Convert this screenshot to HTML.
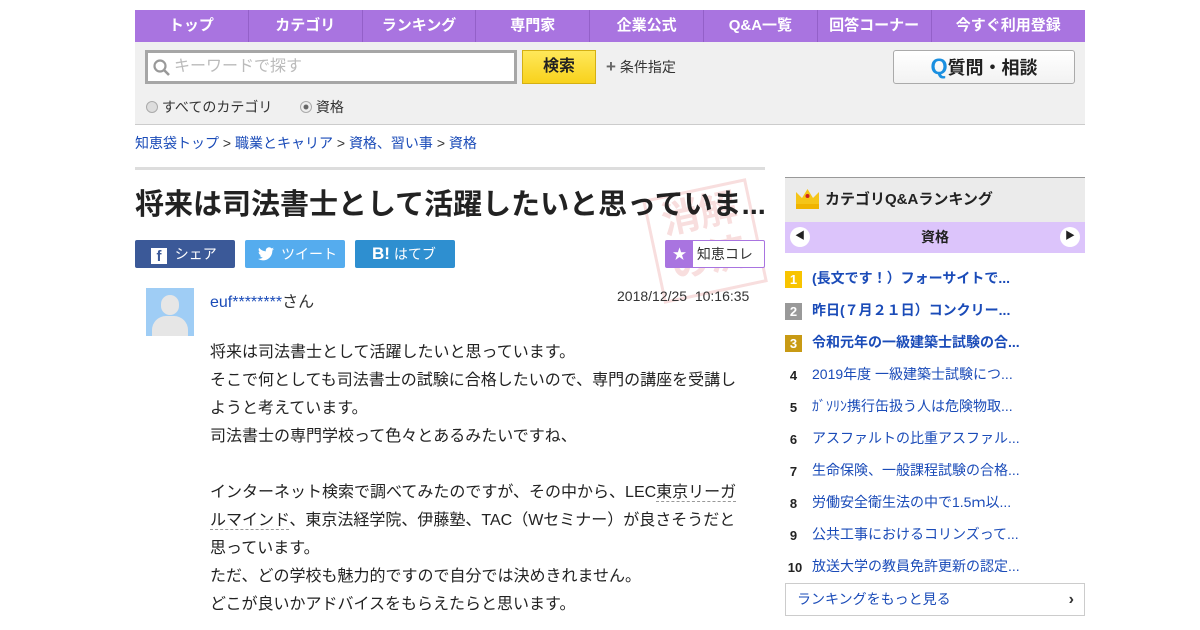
<!DOCTYPE html>
<html><head><meta charset="utf-8"><style>
*{margin:0;padding:0;box-sizing:border-box}
body{width:1200px;height:630px;overflow:hidden;background:#fff;font-family:"Liberation Sans","Noto Sans CJK JP",sans-serif;color:#333;position:relative}
.a{position:absolute}
.nav{left:135px;top:10px;width:950px;height:32px;background:#a974e0;display:flex}
.nav div{flex:1;color:#fff;font-weight:bold;font-size:15px;text-align:center;line-height:32px;border-right:1px solid #9360c8}
.nav div:last-child{border:none;flex:1.36}
.sb{left:135px;top:42px;width:950px;height:83px;background:#f0f0f0;border-bottom:1px solid #ccc}
a,.lk{color:#1a4bb8;text-decoration:none}
.rk{left:785px;width:300px;height:32px;font-size:14px;line-height:32px}
.rk b.n{display:inline-block;width:17px;height:17px;line-height:17px;text-align:center;color:#fff;font-size:13px;margin-right:10px;vertical-align:middle}
.rk .t{color:#1a4bb8}
</style></head><body>
<div class="a nav"><div>トップ</div><div>カテゴリ</div><div>ランキング</div><div>専門家</div><div>企業公式</div><div>Q&amp;A一覧</div><div>回答コーナー</div><div>今すぐ利用登録</div></div>
<div class="a sb"></div>
<div class="a" style="left:145px;top:50px;width:372px;height:34px;border:3px solid #a6a6a6;background:#fff;font-size:16px;color:#bbb;line-height:28px;padding-left:26px">キーワードで探す
<svg class="a" style="left:5px;top:6px" width="18" height="18" viewBox="0 0 18 18"><circle cx="7" cy="7" r="5.5" fill="none" stroke="#999" stroke-width="2.2"/><path d="M11 11l5 5" stroke="#999" stroke-width="2.6"/></svg></div>
<div class="a" style="left:522px;top:50px;width:74px;height:34px;background:linear-gradient(#ffe85a,#f8d21c);border:1px solid #d4b013;text-align:center;line-height:32px;font-weight:bold;font-size:16px;color:#222">検索</div>
<div class="a" style="left:606px;top:57px;font-size:14px;color:#333"><b style="font-size:17px;color:#666">+</b> 条件指定</div>
<div class="a" style="left:893px;top:50px;width:182px;height:34px;background:linear-gradient(#fff,#f2f2f2);border:1px solid #aaa;border-radius:3px;text-align:center;line-height:32px;font-weight:bold;font-size:18px;color:#222"><span style="color:#1a8fe0;font-size:22px">Q</span>質問・相談</div>
<div class="a" style="left:146px;top:98px;font-size:14px;color:#333;line-height:18px"><span style="display:inline-block;width:12px;height:12px;border:1px solid #aaa;border-radius:50%;background:#ddd;vertical-align:-1px"></span> すべてのカテゴリ</div>
<div class="a" style="left:300px;top:98px;font-size:14px;color:#333;line-height:18px"><span style="display:inline-block;width:12px;height:12px;border:1px solid #aaa;border-radius:50%;background:radial-gradient(#666 30%,#eee 40%);vertical-align:-1px"></span> 資格</div>
<div class="a" style="left:135px;top:134px;font-size:14px;line-height:18px"><a>知恵袋トップ</a> &gt; <a>職業とキャリア</a> &gt; <a>資格、習い事</a> &gt; <a>資格</a></div>
<div class="a" style="left:135px;top:167px;width:630px;height:3px;background:#ddd"></div>
<div class="a" style="left:652px;top:188px;width:106px;height:106px;border:3px solid #f8dede;transform:rotate(-12deg);color:#f8dede;font-size:38px;line-height:46px;text-align:center;font-weight:bold">消解<br>の済</div>
<div class="a" style="left:135px;top:186px;font-size:29px;font-weight:bold;color:#222;line-height:38px;white-space:nowrap">将来は司法書士として活躍したいと思っていま...</div>
<div class="a" style="left:135px;top:240px;width:100px;height:28px;background:#3b5998;border-radius:2px;color:#fff;font-size:14px;line-height:28px;padding-left:16px"><span style="display:inline-block;width:16px;height:16px;background:#fff;color:#3b5998;font-weight:bold;text-align:center;line-height:18px;font-size:15px;vertical-align:-2px">f</span>&nbsp; シェア</div>
<div class="a" style="left:245px;top:240px;width:100px;height:28px;background:#55acee;border-radius:2px;color:#fff;font-size:14px;line-height:28px;padding-left:36px">ツイート
<svg class="a" style="left:13px;top:7px" width="16" height="14" viewBox="0 0 24 20"><path d="M24 2.4a10 10 0 0 1-2.8.8A5 5 0 0 0 23.3.4a10 10 0 0 1-3.1 1.2A4.9 4.9 0 0 0 11.8 6 14 14 0 0 1 1.7.9a4.9 4.9 0 0 0 1.5 6.6A4.900 4.900 0 0 1 1 6.9 4.900 4.900 0 0 0 4.900 11.8a4.900 4.900 0 0 1-2.2.1 4.900 4.900 0 0 0 4.600 3.400A9.900 9.900 0 0 1 0 17.300 14 14 0 0 0 7.500 19.500c9.100 0 14-7.500 14-14v-.6A10 10 0 0 0 24 2.400z" fill="#fff"/></svg></div>
<div class="a" style="left:355px;top:240px;width:100px;height:28px;background:#2e8fd0;border-radius:2px;color:#fff;font-size:14px;line-height:28px;padding-left:17px"><b style="font-size:17px">B!</b> はてブ</div>
<div class="a" style="left:665px;top:240px;width:100px;height:28px;border:1px solid #a974e0;border-radius:2px;background:#fff;font-size:14px;line-height:26px"><span style="display:inline-block;width:27px;height:26px;background:#a974e0;color:#fff;text-align:center">★</span> 知恵コレ</div>
<div class="a" style="left:146px;top:288px;width:48px;height:48px;background:#9fcdf5;overflow:hidden"><div class="a" style="left:15px;top:7px;width:18px;height:20px;border-radius:9px;background:#e6e6e6"></div><div class="a" style="left:6px;top:28px;width:36px;height:30px;border-radius:14px 14px 0 0;background:#e6e6e6"></div></div>
<div class="a" style="left:210px;top:288px;font-size:16px;color:#333"><a>euf********</a>さん</div>
<div class="a" style="left:617px;top:288px;font-size:14px;color:#333">2018/12/25&nbsp; 10:16:35</div>
<div class="a" style="left:210px;top:339px;width:540px;font-size:16px;line-height:28px;color:#222">将来は司法書士として活躍したいと思っています。<br>そこで何としても司法書士の試験に合格したいので、専門の講座を受講しようと考えています。<br>司法書士の専門学校って色々とあるみたいですね、<br><br>インターネット検索で調べてみたのですが、その中から、LEC<span style="border-bottom:1px dashed #999">東京リーガルマインド</span>、東京法経学院、伊藤塾、TAC（Wセミナー）が良さそうだと思っています。<br>ただ、どの学校も魅力的ですので自分では決めきれません。<br>どこが良いかアドバイスをもらえたらと思います。</div>
<div class="a" style="left:785px;top:177px;width:300px;height:45px;background:#ebebeb;border-top:1px solid #999;font-size:15px;font-weight:bold;line-height:44px;padding-left:40px;color:#222">カテゴリQ&amp;Aランキング
<svg class="a" style="left:10px;top:10px" width="25" height="22" viewBox="0 0 25 22"><path d="M1 4l6 6 5.5-9 5.5 9 6-6v14H1z" fill="#f5c518"/><rect x="1" y="16" width="23" height="5" fill="#f0b400"/><circle cx="12.5" cy="8" r="2" fill="#c22"/></svg></div>
<div class="a" style="left:785px;top:222px;width:300px;height:31px;background:#dcc4fb;text-align:center;line-height:31px;font-size:14px;font-weight:bold;color:#222">資格
<span class="a" style="left:5px;top:5px;width:20px;height:20px;border-radius:50%;background:#fff;font-size:10px;line-height:20px">◀</span>
<span class="a" style="left:275px;top:5px;width:20px;height:20px;border-radius:50%;background:#fff;font-size:10px;line-height:20px">▶</span></div>
<div class="a rk" style="top:262px;font-weight:bold"><b class="n" style="background:#f8c400">1</b><span class="t">(長文です！）フォーサイトで...</span></div>
<div class="a rk" style="top:294px;font-weight:bold"><b class="n" style="background:#999">2</b><span class="t">昨日(７月２１日）コンクリー...</span></div>
<div class="a rk" style="top:326px;font-weight:bold"><b class="n" style="background:#c89a14">3</b><span class="t">令和元年の一級建築士試験の合...</span></div>
<div class="a rk" style="top:358px"><b class="n" style="color:#222">4</b><span class="t">2019年度 一級建築士試験につ...</span></div>
<div class="a rk" style="top:390px"><b class="n" style="color:#222">5</b><span class="t">ｶﾞｿﾘﾝ携行缶扱う人は危険物取...</span></div>
<div class="a rk" style="top:422px"><b class="n" style="color:#222">6</b><span class="t">アスファルトの比重アスファル...</span></div>
<div class="a rk" style="top:454px"><b class="n" style="color:#222">7</b><span class="t">生命保険、一般課程試験の合格...</span></div>
<div class="a rk" style="top:486px"><b class="n" style="color:#222">8</b><span class="t">労働安全衛生法の中で1.5ｍ以...</span></div>
<div class="a rk" style="top:518px"><b class="n" style="color:#222">9</b><span class="t">公共工事におけるコリンズって...</span></div>
<div class="a rk" style="top:550px"><b class="n" style="color:#222;width:20px;margin-right:7px">10</b><span class="t">放送大学の教員免許更新の認定...</span></div>
<div class="a" style="left:785px;top:583px;width:300px;height:33px;border:1px solid #ccc;font-size:14px;line-height:31px;padding-left:11px;color:#1a4bb8">ランキングをもっと見る<span class="a" style="right:10px;top:0;color:#333;font-weight:bold;font-size:16px">›</span></div>
</body></html>
